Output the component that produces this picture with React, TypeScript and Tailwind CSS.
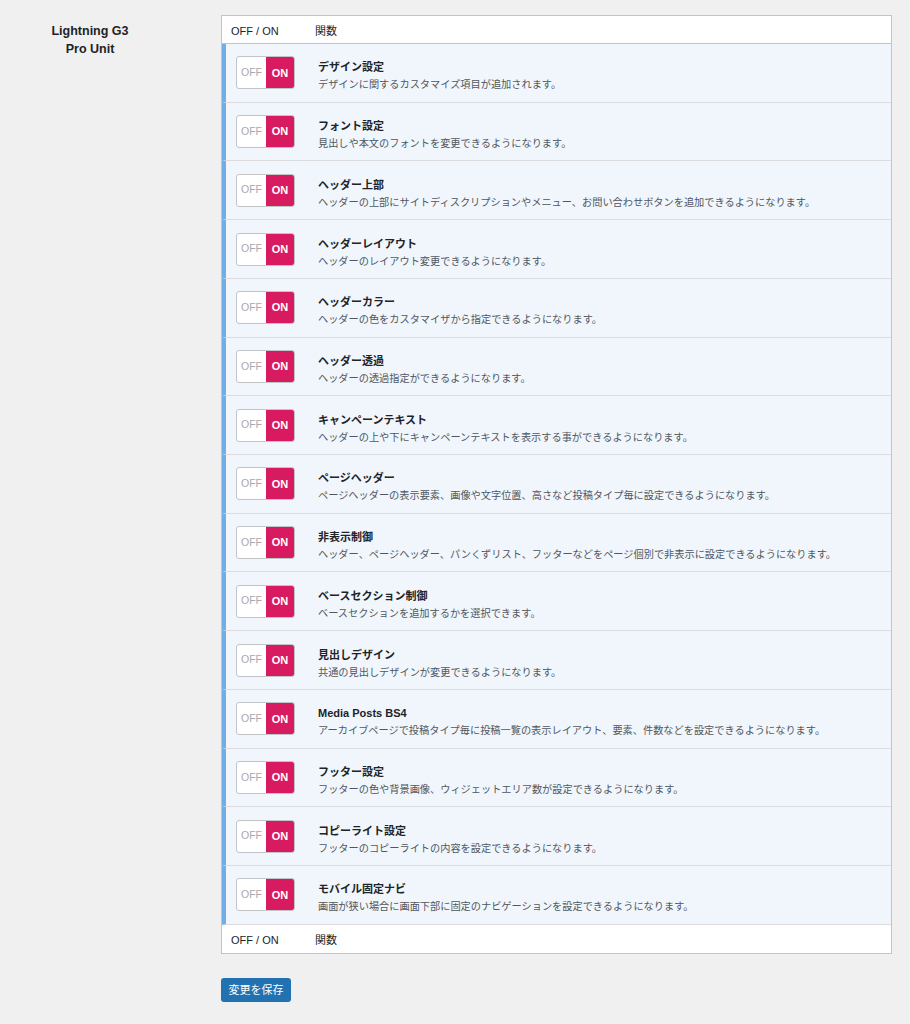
import React from "react";

const rows: [string, string][] = [
  ["デザイン設定", "デザインに関するカスタマイズ項目が追加されます。"],
  ["フォント設定", "見出しや本文のフォントを変更できるようになります。"],
  ["ヘッダー上部", "ヘッダーの上部にサイトディスクリプションやメニュー、お問い合わせボタンを追加できるようになります。"],
  ["ヘッダーレイアウト", "ヘッダーのレイアウト変更できるようになります。"],
  ["ヘッダーカラー", "ヘッダーの色をカスタマイザから指定できるようになります。"],
  ["ヘッダー透過", "ヘッダーの透過指定ができるようになります。"],
  ["キャンペーンテキスト", "ヘッダーの上や下にキャンペーンテキストを表示する事ができるようになります。"],
  ["ページヘッダー", "ページヘッダーの表示要素、画像や文字位置、高さなど投稿タイプ毎に設定できるようになります。"],
  ["非表示制御", "ヘッダー、ページヘッダー、パンくずリスト、フッターなどをページ個別で非表示に設定できるようになります。"],
  ["ベースセクション制御", "ベースセクションを追加するかを選択できます。"],
  ["見出しデザイン", "共通の見出しデザインが変更できるようになります。"],
  ["Media Posts BS4", "アーカイブページで投稿タイプ毎に投稿一覧の表示レイアウト、要素、件数などを設定できるようになります。"],
  ["フッター設定", "フッターの色や背景画像、ウィジェットエリア数が設定できるようになります。"],
  ["コピーライト設定", "フッターのコピーライトの内容を設定できるようになります。"],
  ["モバイル固定ナビ", "画面が狭い場合に画面下部に固定のナビゲーションを設定できるようになります。"],
];

const font = { fontFamily: '"Liberation Sans", "Noto Sans CJK JP", sans-serif' };

function Toggle() {
  return (
    <div className="flex h-[33px] w-[59px] shrink-0 overflow-hidden rounded-[3px] border border-[#c3c4c7] bg-white">
      <div className="flex w-[29px] items-center justify-center text-[10.5px] text-[#a7aaad]">OFF</div>
      <div className="flex flex-1 items-center justify-center bg-[#d81b60] text-[11px] font-bold text-white">ON</div>
    </div>
  );
}

function HeadRow({ border }: { border: "b" | "t" }) {
  return (
    <div
      className={`flex h-[28px] items-center bg-white pt-[3px] text-[11px] text-[#1d2327] ${
        border === "b" ? "border-b border-[#c3c4c7]" : ""
      }`}
    >
      <div className="w-[93px] pl-[9px]">OFF / ON</div>
      <div>関数</div>
    </div>
  );
}

export default function App() {
  return (
    <div className="min-h-screen bg-[#f0f0f1]" style={font}>
      <div className="flex">
        <div className="w-[221px] shrink-0">
          <div className="w-[180px] pt-[22px] text-center text-[12.5px] font-bold leading-[18px] text-[#1d2327]">
            Lightning G3
            <br />
            Pro Unit
          </div>
        </div>
        <div className="w-[671px] pt-[15px]">
          <div className="border border-[#c3c4c7]">
            <HeadRow border="b" />
            {rows.map(([title, desc], i) => (
              <div
                key={i}
                className="flex h-[58.73px] items-center border-b border-l-[4px] border-b-[#dcdcde] border-l-[#72aee6] bg-[#f0f6fc] pl-[10px]"
              >
                <Toggle />
                <div className="ml-[23px] flex flex-col pt-[6px]">
                  <div className="text-[11px] font-bold leading-[16px] text-[#1d2327]">{title}</div>
                  <div className="mt-[2px] text-[10.2px] leading-[15px] text-[#50575e]">{desc}</div>
                </div>
              </div>
            ))}
            <HeadRow border="t" />
          </div>
          <div className="mt-[24px]">
            <button className="flex h-[24px] w-[70px] items-center justify-center rounded-[3px] bg-[#2271b1] text-[11px] text-white">
              変更を保存
            </button>
          </div>
        </div>
      </div>
    </div>
  );
}
